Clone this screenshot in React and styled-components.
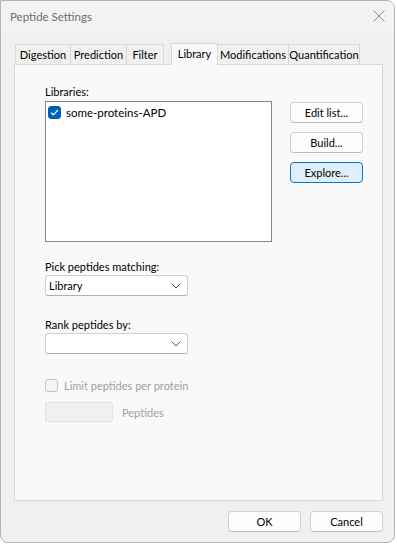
import React from 'react';
import styled, { createGlobalStyle } from 'styled-components';

const GlobalStyle = createGlobalStyle`
  html, body {
    margin: 0;
    padding: 0;
    background: #ffffff;
  }
  * { box-sizing: border-box; }
`;

const tabs = [
  { name: 'Digestion', w: 56 },
  { name: 'Prediction', w: 57 },
  { name: 'Filter', w: 38 },
  { name: 'Library', w: 47 },
  { name: 'Modifications', w: 72 },
  { name: 'Quantification', w: 72 },
];

const Window = styled.div`
  width: 395px;
  height: 543px;
  background: #f0f0f0;
  border: 1px solid #b4b4b4;
  border-radius: 0 8px 8px 8px;
  display: flex;
  flex-direction: column;
  font-family: Lato, "Liberation Sans", sans-serif;
  font-size: 11px;
  line-height: 15px;
  color: #000;
  overflow: hidden;
`;

const TitleBar = styled.div`
  height: 30px;
  display: flex;
  align-items: center;
  justify-content: space-between;
  padding: 0 9px 0 9px;
  background: #f3f3f3;
`;

const Title = styled.span`
  color: #6e6e6e;
  font-size: 11.5px;
`;

const CloseIcon = styled.svg`
  width: 12px;
  height: 12px;
`;

const Body = styled.div`
  flex: 1;
  display: flex;
  flex-direction: column;
  padding: 11px 11px 0 13px;
`;

const TabStrip = styled.div`
  display: flex;
  align-items: flex-end;
  height: 22px;
  padding-left: 1px;
`;

const Tab = styled.div`
  width: ${({ $w }) => $w}px;
  height: ${({ $active }) => ($active ? '22px' : '20px')};
  display: flex;
  align-items: center;
  justify-content: center;
  background: ${({ $active }) => ($active ? '#f9f9f9' : '#f0f0f0')};
  border: 1px solid #d9d9d9;
  border-bottom: none;
  margin-left: ${({ $first, $active }) => ($first ? '0' : $active ? '7px' : '-1px')};
  position: relative;
  z-index: ${({ $active }) => ($active ? 2 : 1)};
  margin-bottom: ${({ $active }) => ($active ? '-1px' : '0')};
  padding-bottom: ${({ $active }) => ($active ? '2px' : '0')};
`;

const Panel = styled.div`
  height: 437px;
  background: #f9f9f9;
  border: 1px solid #d9d9d9;
  padding: 19px 0 0 30px;
  display: flex;
  flex-direction: column;
`;

const Label = styled.div`
  color: ${({ $disabled }) => ($disabled ? '#a0a0a0' : '#000')};
`;

const LibraryRow = styled.div`
  display: flex;
  gap: 18px;
  margin-top: 2px;
`;

const ListBox = styled.div`
  width: 227px;
  height: 141px;
  background: #fff;
  border: 1px solid #828790;
  padding: 2px 2px;
`;

const ListItem = styled.div`
  display: flex;
  align-items: center;
  gap: 5px;
  height: 16px;
  font-size: 11.5px;
`;

const CheckBox = styled.div`
  width: 13px;
  height: 13px;
  border-radius: 3px;
  flex-shrink: 0;
  display: flex;
  align-items: center;
  justify-content: center;
  background: ${({ $checked }) => ($checked ? '#005fb8' : '#f5f5f5')};
  border: 1px solid ${({ $checked }) => ($checked ? '#005fb8' : '#c4c4c4')};
`;

const ButtonColumn = styled.div`
  display: flex;
  flex-direction: column;
  gap: 9px;
  padding-top: 1px;
`;

const Button = styled.div`
  width: 73px;
  height: 21px;
  display: flex;
  align-items: center;
  justify-content: center;
  border-radius: 4px;
  background: ${({ $focus }) => ($focus ? '#e0eef9' : '#fdfdfd')};
  border: 1px solid ${({ $focus }) => ($focus ? '#0078d4' : '#d0d0d0')};
  border-bottom-color: ${({ $focus }) => ($focus ? '#0078d4' : '#bcbcbc')};
`;

const Field = styled.div`
  display: flex;
  flex-direction: column;
  margin-top: ${({ $mt }) => $mt}px;
`;

const Combo = styled.div`
  width: 143px;
  height: 21px;
  margin-top: 1px;
  background: #fff;
  border: 1px solid #d0d0d0;
  border-bottom-color: #b0b0b0;
  border-radius: 3px;
  display: flex;
  align-items: center;
  justify-content: space-between;
  padding: 0 6px 0 3px;
`;

const CheckRow = styled.label`
  display: flex;
  align-items: center;
  gap: 6px;
  margin-top: 24px;
  color: #a0a0a0;
`;

const SpinRow = styled.div`
  display: flex;
  align-items: center;
  gap: 9px;
  margin-top: 9px;
`;

const DisabledInput = styled.div`
  width: 68px;
  height: 20px;
  background: #f0f0f0;
  border: 1px solid #e2e2e2;
  border-radius: 2px;
`;

const Footer = styled.div`
  display: flex;
  justify-content: flex-end;
  gap: 9px;
  padding-top: 10px;
`;

const Chevron = () => (
  <svg width="10" height="6" viewBox="0 0 10 6">
    <path d="M0.5 0.5 L5 5 L9.5 0.5" fill="none" stroke="#555" strokeWidth="1" />
  </svg>
);

export default function App() {
  return (
    <>
      <GlobalStyle />
      <Window>
        <TitleBar>
          <Title>Peptide Settings</Title>
          <CloseIcon viewBox="0 0 12 12">
            <path d="M0.5 0.5 L11.5 11.5 M11.5 0.5 L0.5 11.5" stroke="#8a8a8a" strokeWidth="1" />
          </CloseIcon>
        </TitleBar>
        <Body>
          <TabStrip>
            {tabs.map((t, i) => (
              <Tab key={t.name} $w={t.w} $first={i === 0} $active={t.name === 'Library'}>
                {t.name}
              </Tab>
            ))}
          </TabStrip>
          <Panel>
            <Label>Libraries:</Label>
            <LibraryRow>
              <ListBox>
                <ListItem>
                  <CheckBox $checked>
                    <svg width="9" height="7" viewBox="0 0 9 7">
                      <path d="M1 3.6 L3.3 5.8 L8 1" fill="none" stroke="#fff" strokeWidth="1.2" />
                    </svg>
                  </CheckBox>
                  some-proteins-APD
                </ListItem>
              </ListBox>
              <ButtonColumn>
                <Button>Edit list...</Button>
                <Button>Build...</Button>
                <Button $focus>Explore...</Button>
              </ButtonColumn>
            </LibraryRow>
            <Field $mt={17}>
              <Label>Pick peptides matching:</Label>
              <Combo>
                <span>Library</span>
                <Chevron />
              </Combo>
            </Field>
            <Field $mt={21}>
              <Label>Rank peptides by:</Label>
              <Combo>
                <span />
                <Chevron />
              </Combo>
            </Field>
            <CheckRow>
              <CheckBox />
              Limit peptides per protein
            </CheckRow>
            <SpinRow>
              <DisabledInput />
              <Label $disabled>Peptides</Label>
            </SpinRow>
          </Panel>
          <Footer>
            <Button>OK</Button>
            <Button>Cancel</Button>
          </Footer>
        </Body>
      </Window>
    </>
  );
}
